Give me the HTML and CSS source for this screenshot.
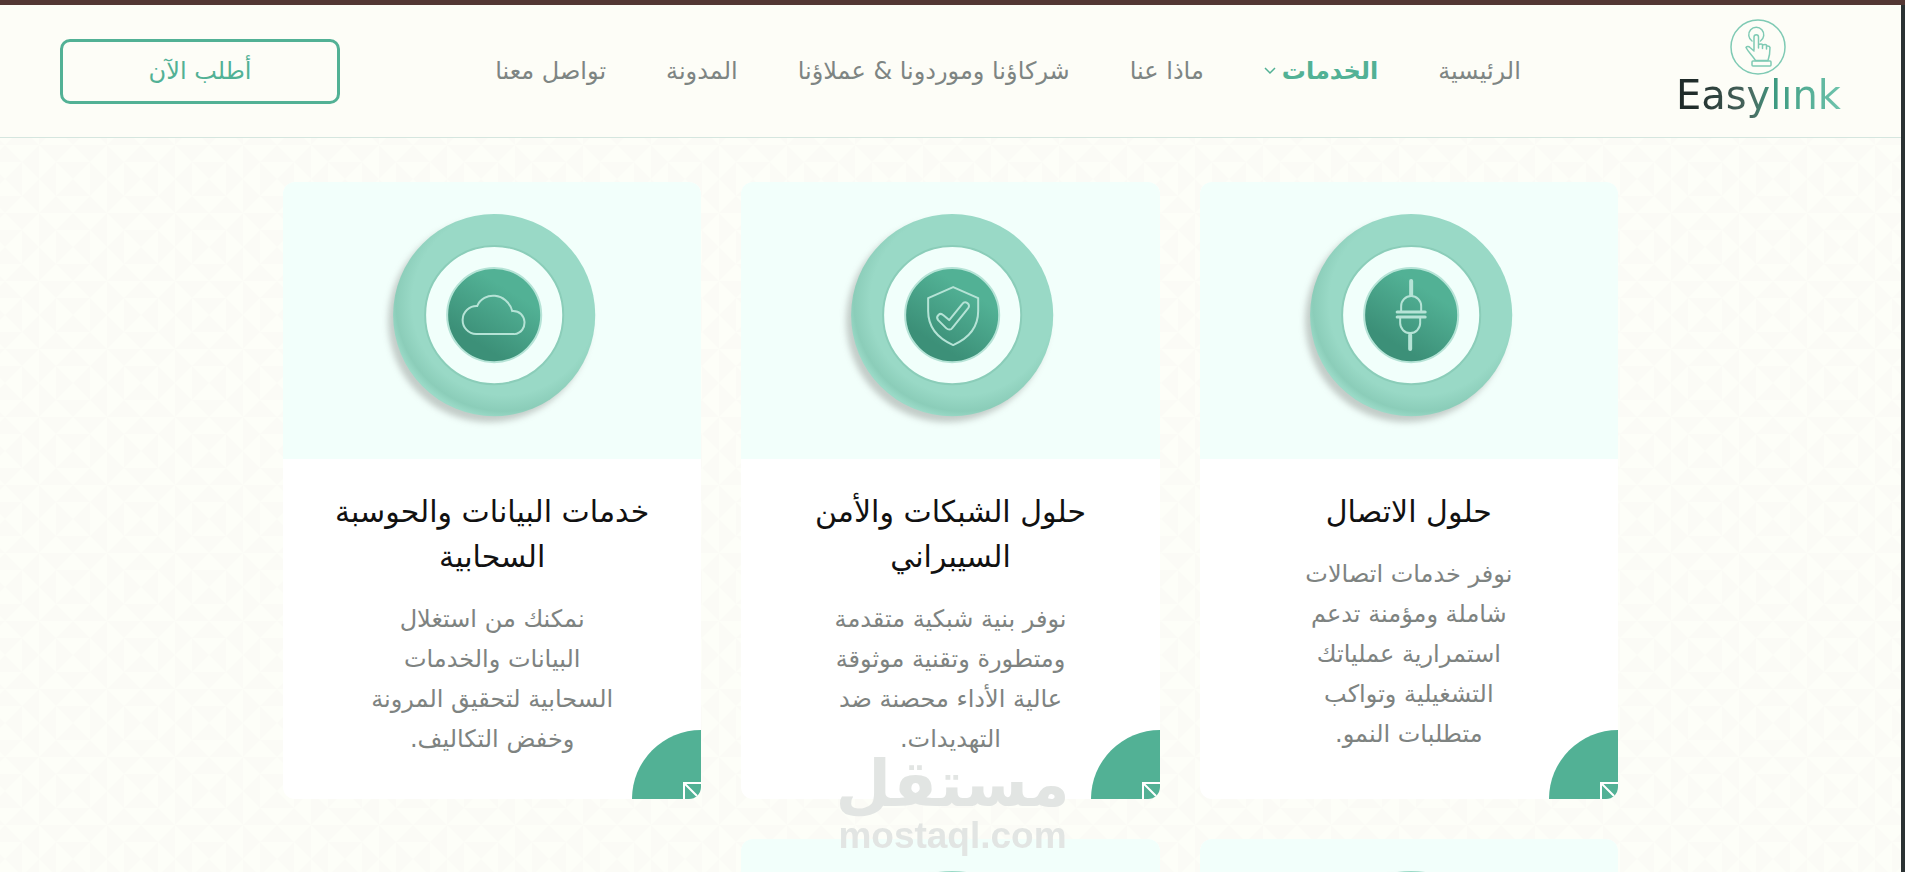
FILE: index.html
```
<!DOCTYPE html>
<html lang="ar" dir="rtl">
<head>
    <meta charset="utf-8">
    <title>Easylink</title>
    <link rel="stylesheet" href="styles.css">
</head>
<body>
    <!-- shared drawings -->
    <svg class="defs" width="0" height="0" aria-hidden="true">
        <defs>
            <linearGradient id="knob" x1="0.8" y1="0.1" x2="0.3" y2="0.9">
                <stop offset="0.2" stop-color="#52b195"/>
                <stop offset="0.9" stop-color="#3c9078"/>
            </linearGradient>
            <radialGradient id="ring" cx="0.55" cy="0.44" r="0.57">
                <stop offset="0.8" stop-color="#99d9c6"/>
                <stop offset="0.94" stop-color="#8bcdb9"/>
                <stop offset="1" stop-color="#9adac7"/>
            </radialGradient>
            <filter id="blur" x="-20%" y="-20%" width="140%" height="140%">
                <feGaussianBlur stdDeviation="3"/>
            </filter>
            <g id="disc">
                <circle cx="206" cy="140" r="101" fill="#b3bbb7" opacity="0.75" filter="url(#blur)"/>
                <circle cx="211" cy="134" r="101" fill="url(#ring)"/>
                <circle cx="211" cy="134" r="69" fill="#f1fffb" stroke="#8bcdb9" stroke-width="2"/>
                <circle cx="211" cy="134" r="47" fill="url(#knob)" stroke="#b5e3d6" stroke-width="2"/>
            </g>
            <g id="corner-arrow" fill="none" stroke="#fff" stroke-width="2">
                <path d="M52 69V53H69M52 53L69 70"/>
            </g>
        </defs>
    </svg>

    <div class="page">
        <header class="header">
            <a href="#" class="logo">
                <svg width="56" height="56" viewBox="0 0 56 56" fill="none" stroke="#7fcab4" stroke-linecap="round" stroke-linejoin="round">
                    <circle cx="28" cy="28" r="27" stroke-width="1.500"/>
                    <path d="M22 22a7.500 7.500 0 1 1 8.500 0" stroke-width="1.500"/>
                    <path d="M24 31V18a2 2 0 0 1 4.500 0v11M28.500 25.500q3-1 4 0v4M32.500 26q3-1 4 0v4M36.500 27q3-.5 3.500 1.500c0 6-.5 9-2 13H25.500c-3-5-7-8-9.500-13 1-1.500 3-1 4 0l4 3.500" stroke-width="1.500"/>
                    <rect x="22" y="42" width="19" height="5" rx="1" stroke-width="1.500"/>
                </svg>
                <span class="logo-text" dir="ltr">Easylınk</span>
            </a>
            <nav class="nav">
                <a href="#">الرئيسية</a>
                <a href="#" class="active">الخدمات
                    <svg width="12" height="8" viewBox="0 0 12 8" fill="none" stroke="#52b195" stroke-width="1.500"><path d="M1 1l5 5 5-5"/></svg>
                </a>
                <a href="#">ماذا عنا</a>
                <a href="#">شركاؤنا وموردونا &amp; عملاؤنا</a>
                <a href="#">المدونة</a>
                <a href="#">تواصل معنا</a>
            </nav>
            <button type="button" class="order-btn">أطلب الآن</button>
        </header>

        <main class="cards">
            <article class="card">
                <svg class="card-img" viewBox="0 1 418 277">
                    <use href="#disc"/>
                    <g fill="none" stroke="#b5e3d6" stroke-width="2" stroke-linecap="round">
                        <path d="M211 100v14M210 154v14" stroke-width="4"/>
                        <path d="M197 131h28M197 136h28" stroke-width="3"/>
                        <path d="M201 131v-6a10 10 0 0 1 20 0v6M200 136v6a10 10 0 0 0 20 0v-6"/>
                    </g>
                </svg>
                <div class="card-body">
                    <h2>حلول الاتصال</h2>
                    <p>نوفر خدمات اتصالات<br>شاملة ومؤمنة تدعم<br>استمرارية عملياتك<br>التشغيلية وتواكب<br>متطلبات النمو.</p>
                </div>
                <a href="#" class="corner" aria-label="حلول الاتصال"><svg width="69" height="69"><use href="#corner-arrow"/></svg></a>
            </article>

            <article class="card">
                <svg class="card-img" viewBox="0 1 418 277">
                    <use href="#disc"/>
                    <g fill="none" stroke="#b5e3d6" stroke-width="2" stroke-linejoin="round">
                        <path d="M212 106l25 11v13c0 15-9 27-25 34-16-7-25-19-25-34v-13z"/>
                        <path d="M208 139l13-16c3-4 9 0 6 4l-16 20c-1 2-4 2-6 0l-8-8c-3-4 2-8 5-5z"/>
                    </g>
                </svg>
                <div class="card-body">
                    <h2>حلول الشبكات والأمن<br>السيبراني</h2>
                    <p>نوفر بنية شبكية متقدمة<br>ومتطورة وتقنية موثوقة<br>عالية الأداء محصنة ضد<br>التهديدات.</p>
                </div>
                <a href="#" class="corner" aria-label="حلول الشبكات"><svg width="69" height="69"><use href="#corner-arrow"/></svg></a>
            </article>

            <article class="card">
                <svg class="card-img" viewBox="0 1 418 277">
                    <use href="#disc"/>
                    <path d="M193 153a14 14 0 0 1 1-28c6-15 30-14 35 5 15-1 17 21 2 23z" fill="none" stroke="#b5e3d6" stroke-width="2"/>
                </svg>
                <div class="card-body">
                    <h2>خدمات البيانات والحوسبة<br>السحابية</h2>
                    <p>نمكنك من استغلال<br>البيانات والخدمات<br>السحابية لتحقيق المرونة<br>وخفض التكاليف.</p>
                </div>
                <a href="#" class="corner" aria-label="خدمات البيانات"><svg width="69" height="69"><use href="#corner-arrow"/></svg></a>
            </article>

            <article class="card">
                <svg class="card-img" viewBox="0 1 418 277"><use href="#disc"/></svg>
            </article>
            <article class="card">
                <svg class="card-img" viewBox="0 1 418 277"><use href="#disc"/></svg>
            </article>
        </main>
    </div>

    <div class="watermark">
        <span class="watermark-ar">مستقل</span>
        <span class="watermark-en" dir="ltr">mostaql.com</span>
    </div>
</body>
</html>
```
FILE: styles.css
```
* {
    box-sizing: border-box;
}

body {
    display: flex;
    flex-direction: column;
    margin: 0;
    height: 100vh;
    overflow: hidden;
    border-top: 5px solid #533734;
    font-family: "DejaVu Sans", sans-serif;
    background-color: #fdfdf7;
}

a {
    text-decoration: none;
    color: inherit;
}

.defs {
    position: absolute;
}

.page {
    direction: rtl;
    flex: 1;
    min-height: 0;
    overflow: hidden;
    border-right: 4px solid #2b3233;
    background: #fdfef8 url("data:image/svg+xml,%3Csvg xmlns='http://www.w3.org/2000/svg' width='136' height='136' fill='%23fbfbf6'%3E%3Cdefs%3E%3Cpath id='a' d='M17 17H51L34 34zM17 51H51L34 34zM17 17V51L0 34zM51 17V51L68 34zM0 0H34L17 17zM34 0H68L51 17zM0 68H34L17 51zM34 68H68L51 51z'/%3E%3Cpath id='b' d='M17 17V51L34 34zM51 17V51L34 34zM0 0V34L17 17zM0 34V68L17 51zM68 0V34L51 17zM68 34V68L51 51zM34 0L17 17H51zM34 68L17 51H51z'/%3E%3C/defs%3E%3Cuse href='%23a'/%3E%3Cuse href='%23a' x='68' y='68'/%3E%3Cuse href='%23b' x='68'/%3E%3Cuse href='%23b' y='68'/%3E%3C/svg%3E") 39px 140px;
}

.header {
    display: flex;
    align-items: center;
    justify-content: space-between;
    height: 133px;
    padding: 0 60px;
    background-color: #fdfdf7;
    border-bottom: 1px solid #d5e6df;
}

.logo {
    display: flex;
    flex-direction: column;
    align-items: center;
    padding-bottom: 8px;
}

.logo-text {
    font-size: 40px;
    line-height: 40px;
    padding-bottom: 4px;
    margin-bottom: -4px;
    color: transparent;
    background: linear-gradient(90deg, #1f2b29 10%, #4a6a61 45%, #3d9a80 60%, #6fc4ad);
    background-clip: text;
    -webkit-background-clip: text;
}

.nav {
    display: flex;
    gap: 60px;
    font-size: 24px;
    color: #7e8583;
}

.nav .active {
    display: flex;
    align-items: center;
    gap: 6px;
    font-weight: bold;
    color: #52b195;
}

.order-btn {
    width: 280px;
    height: 65px;
    border: 3px solid #52b195;
    border-radius: 10px;
    background: transparent;
    font-family: inherit;
    font-size: 24px;
    color: #52b195;
    cursor: pointer;
}

.cards {
    display: grid;
    grid-template-columns: repeat(3, 1fr);
    gap: 40px;
    max-width: 1335px;
    margin: 0 auto;
    padding-top: 44px;
}

.card {
    position: relative;
    overflow: hidden;
    border-radius: 12px;
    background-color: #fff;
}

.card-img {
    display: block;
    width: 100%;
    background-color: #f2fffb;
}

.card-body {
    padding: 30px 20px 40px;
    text-align: center;
}

.card-body h2 {
    margin: 0 0 20px;
    font-size: 30px;
    font-weight: normal;
    line-height: 45px;
    color: #111;
}

.card-body p {
    margin: 0;
    font-size: 24px;
    line-height: 40px;
    color: #7e8381;
}

.corner {
    position: absolute;
    right: 0;
    bottom: 0;
    width: 69px;
    height: 69px;
    border-top-left-radius: 69px;
    background-color: #52b195;
}

.watermark {
    position: fixed;
    left: 0;
    right: 0;
    bottom: 16px;
    display: flex;
    flex-direction: column;
    align-items: center;
    color: #e2e5e3;
    font-weight: bold;
}

.watermark-ar {
    font-size: 64px;
    line-height: 64px;
}

.watermark-en {
    font-family: "Liberation Sans", sans-serif;
    font-size: 37px;
    line-height: 40px;
}
```
